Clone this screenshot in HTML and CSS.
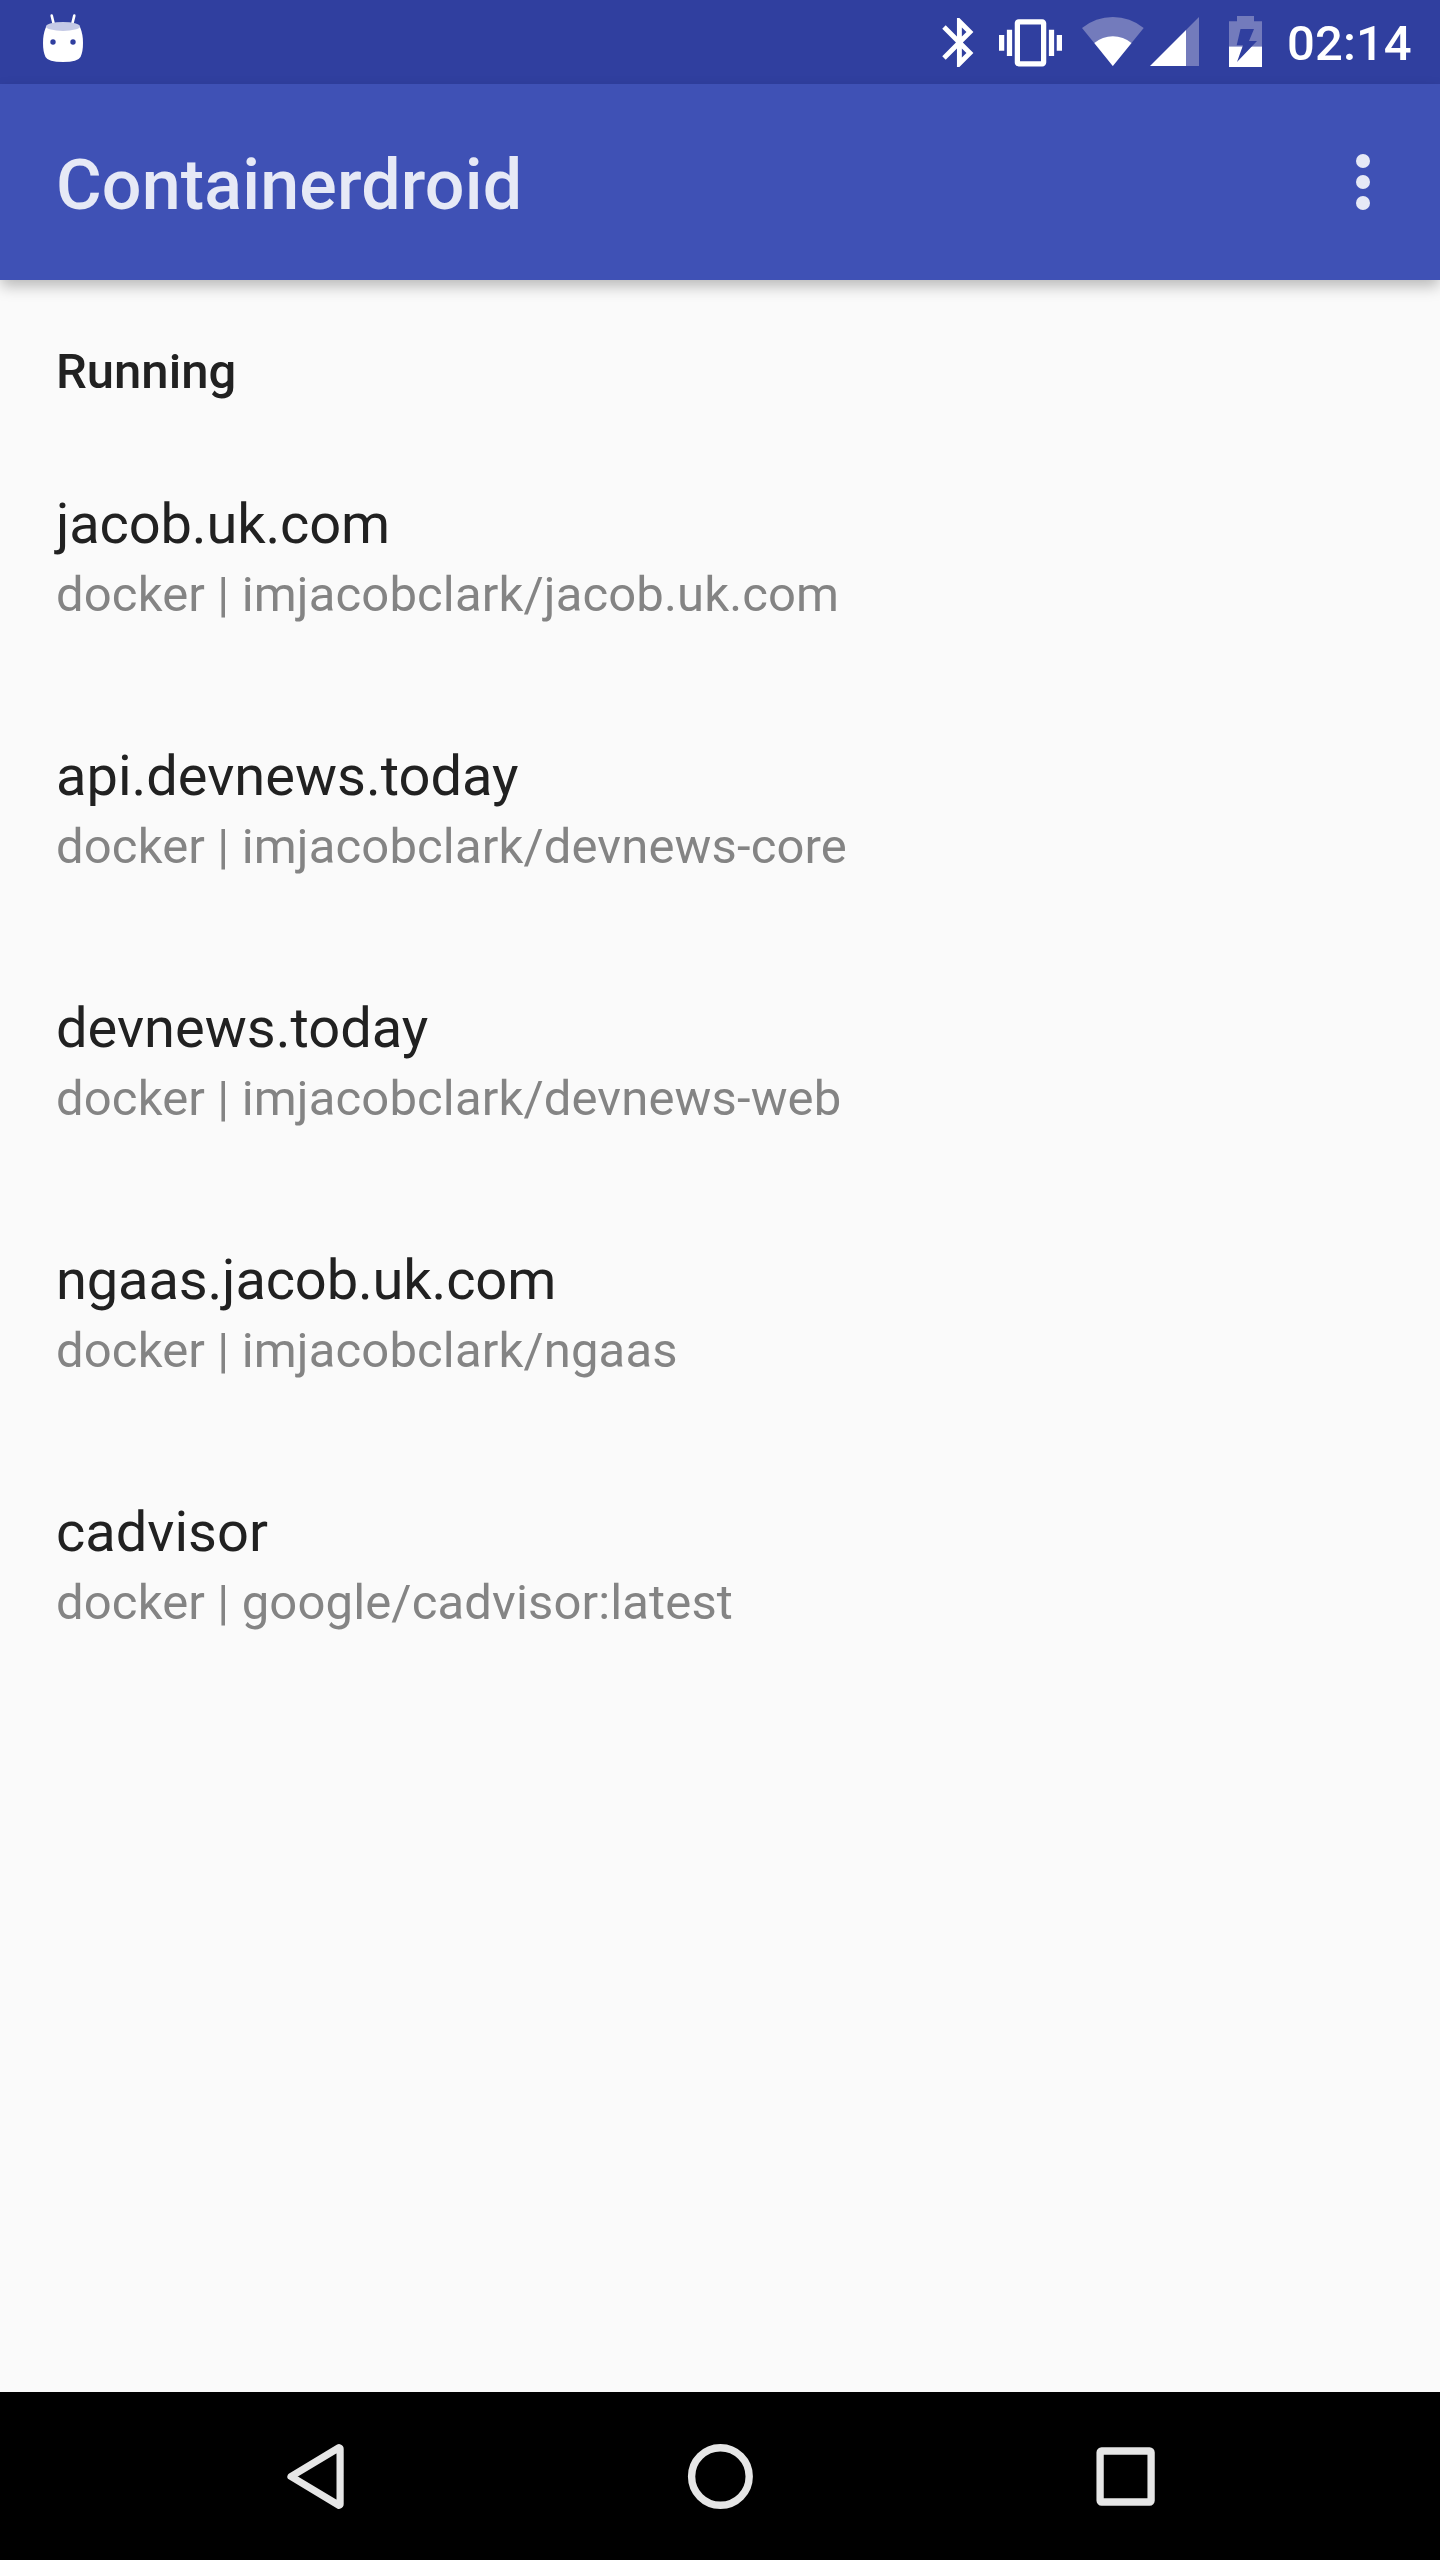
FILE: index.html
```html
<!DOCTYPE html>
<html lang="en">
<head>
<meta charset="utf-8">
<title>Containerdroid</title>
<link rel="stylesheet" href="styles.css">
</head>
<body>
<header class="status">
  <svg class="droid" width="42" height="50" viewBox="42 13 42 50">
    <path d="M51.7 15.6L54 25M74.3 15.6L72 25" fill="none" stroke="#fff" stroke-width="2.6" stroke-linecap="round"/>
    <path d="M46 27Q43 34 43 43Q43 52 45.500 57Q48 62 63 62T80.500 57Q83 52 83 43Q83 34 80 27Z" fill="#fff"/>
    <ellipse cx="63" cy="26.400" rx="17" ry="4.500" fill="#c5cae6"/>
    <circle cx="53" cy="42" r="2.700" fill="#303f9f"/><circle cx="73" cy="42" r="2.700" fill="#303f9f"/>
  </svg>
  <div class="indicators">
    <svg class="bluetooth" width="32" height="56" viewBox="942 14 32 56"><path transform="translate(930 13.100) scale(2.450)" fill="#fff" d="M17.710 7.710L12 2h-1v7.590L6.410 5 5 6.410 10.590 12 5 17.590 6.410 19 11 14.410V22h1l5.710-5.710-4.300-4.290 4.300-4.290zM13 5.830l1.880 1.880L13 9.590V5.830zm1.880 10.460L13 18.170v-3.760l1.880 1.880z"/></svg>
    <svg class="vibrate" width="63" height="56" viewBox="999 14 63 56"><path transform="translate(999 11.300) scale(2.625)" fill="#fff" d="M0 15h2V9H0v6zm3 2h2V7H3v10zm19-8v6h2V9h-2zm-3 8h2V7h-2v10zM16.500 3h-9C6.670 3 6 3.670 6 4.500v15c0 .83.67 1.500 1.500 1.500h9c.83 0 1.500-.67 1.500-1.500v-15c0-.83-.67-1.500-1.500-1.500zM16 19H8V5h8v14z"/></svg>
    <svg class="wifi" width="62" height="56" viewBox="1082 14 62 56"><path fill="#737bbc" d="M1112.800 66L1082 28A48.600 48.600 0 0 1 1143.700 28Z"/><path fill="#fff" d="M1112.800 66L1094.300 43A29 29 0 0 1 1131.500 43Z"/></svg>
    <svg class="signal" width="49" height="56" viewBox="1150 14 49 56"><path fill="#737bbc" d="M1186 66V30L1199 17V66Z"/><path fill="#fff" d="M1150 66L1186 30V66Z"/></svg>
    <svg class="battery" width="33" height="56" viewBox="1229 14 33 56"><path fill="#737bbc" d="M1229 46.500V21.200H1237V16H1254V21.200H1262V46.500Z"/><path fill="#fff" d="M1229 46.500H1262V67H1229Z"/><path fill="#303f9f" d="M1240.500 29H1254L1249 41H1257L1237 62L1243 45.300H1236.700Z"/></svg>
    <span class="clock">02:14</span>
  </div>
</header>
<div class="appbar">
  <h1 class="title">Containerdroid</h1>
  <svg class="more" width="14" height="56" viewBox="0 0 14 56" fill="#e6e9f6"><circle cx="7" cy="7" r="7"/><circle cx="7" cy="28" r="7"/><circle cx="7" cy="49" r="7"/></svg>
</div>
<main class="content">
  <h2 class="section">Running</h2>
  <ul class="list">
    <li class="item"><div class="name tight">jacob.uk.com</div><div class="image">docker | imjacobclark/jacob.uk.com</div></li>
    <li class="item"><div class="name">api.devnews.today</div><div class="image">docker | imjacobclark/devnews-core</div></li>
    <li class="item"><div class="name">devnews.today</div><div class="image">docker | imjacobclark/devnews-web</div></li>
    <li class="item"><div class="name tight">ngaas.jacob.uk.com</div><div class="image">docker | imjacobclark/ngaas</div></li>
    <li class="item"><div class="name">cadvisor</div><div class="image">docker | google/cadvisor:latest</div></li>
  </ul>
</main>
<nav class="navbar">
  <svg width="60" height="68" viewBox="286 2443 60 68"><path d="M291 2476.500L339 2447.700Q340.100 2448 340.100 2449V2504Q340.100 2505 339 2505.300Z" fill="none" stroke="#e6e6e6" stroke-width="7.200" stroke-linejoin="round"/></svg>
  <svg width="68" height="68" viewBox="0 0 68 68"><circle cx="33.400" cy="33.500" r="28.800" fill="none" stroke="#e6e6e6" stroke-width="7.400"/></svg>
  <svg width="60" height="68" viewBox="1096 2443 60 68"><rect x="1100.100" y="2451" width="51" height="51" rx="1.500" fill="none" stroke="#e6e6e6" stroke-width="7.300"/></svg>
</nav>
</body>
</html>
```

FILE: styles.css
```css
* { box-sizing: border-box; margin: 0; padding: 0; }
svg { display: block; flex: none; }
body { width: 1440px; height: 2560px; display: flex; flex-direction: column; overflow: hidden; background: #fafafa; font-family: Roboto, sans-serif; color: #212121; }
.status { height: 84px; background: #303f9f; display: flex; align-items: center; justify-content: space-between; padding: 0 28px 0 42px; color: #fff; }
.droid { margin-bottom: 8px; }
.indicators { display: flex; align-items: center; }
.vibrate { margin-left: 25px; }
.wifi { margin-left: 20px; }
.signal { margin-left: 6px; }
.battery { margin-left: 30px; }
.clock { width: 125px; margin-left: 25px; padding-top: 4px; font-size: 49px; font-weight: 500; line-height: 56px; letter-spacing: 0.1px; white-space: nowrap; }
.appbar { position: relative; height: 196px; background: #3f51b5; padding: 0 70px 0 56px; display: flex; align-items: center; justify-content: space-between; box-shadow: 0 7px 14px -1px rgba(0, 0, 0, 0.27); }
.title { padding-top: 5px; font-size: 70px; font-weight: 500; letter-spacing: 0.15px; color: #e6e9f6; }
.content { flex: 1; padding: 59px 56px; }
.section { font-size: 49px; font-weight: 500; line-height: 66px; }
.list { list-style: none; margin-top: 66px; }
.item { height: 252px; padding-top: 20px; }
.name { font-size: 56px; line-height: 66px; }
.tight { letter-spacing: -0.14px; }
.image { margin-top: 5px; font-size: 49px; line-height: 66px; letter-spacing: 0.14px; color: #848484; }
.navbar { display: flex; align-items: center; justify-content: space-between; height: 168px; padding: 1px 284px 0 286px; background: #000; }
```
